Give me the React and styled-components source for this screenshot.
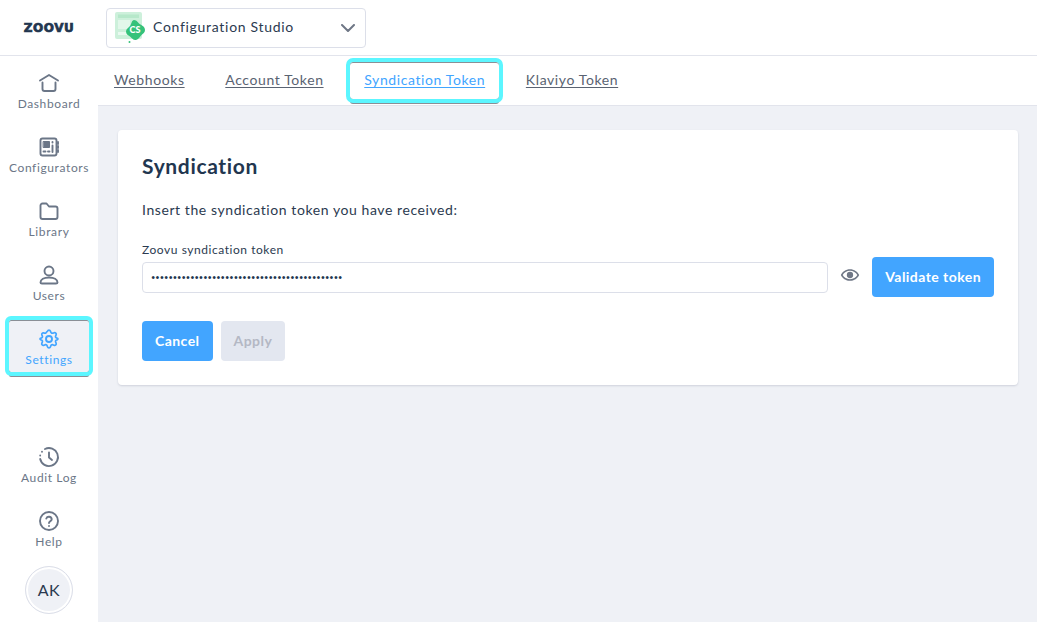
import React from 'react';
import styled, {createGlobalStyle} from 'styled-components';

const GlobalStyle = createGlobalStyle`
    html, body, #root {
        margin: 0;
        height: 100%;
    }
    body {
        font-family: Lato, "Noto Sans", sans-serif;
        color: #2b3a50;
        background: #eff1f6;
        overflow: hidden;
    }
    * {
        box-sizing: border-box;
    }
`;

const IconBase = ({children, size = 24, color = 'currentColor', ...rest}) => (
    <svg width={size} height={size} viewBox="0 0 24 24" fill="none" stroke={color} strokeWidth="1.9" strokeLinecap="round" strokeLinejoin="round" {...rest}>
        {children}
    </svg>
);

const HomeIcon = () => (
    <IconBase>
        <path d="M3 9.500 12 4l9 5.500" />
        <path d="M5.500 11.500V18a2 2 0 0 0 2 2h9a2 2 0 0 0 2-2v-6.500" />
    </IconBase>
);

const ConfiguratorIcon = () => (
    <IconBase>
        <rect x="3.500" y="3.500" width="16" height="17" rx="2" />
        <rect x="6.500" y="6.500" width="6" height="6" fill="currentColor" strokeWidth="1" />
        <path d="M15.500 7v.5M15.500 10.500V17M6.500 16.500h2M11 16.500h1.500M21 7v2M21 11v2M21 15v2" />
    </IconBase>
);

const FolderIcon = () => (
    <IconBase>
        <path d="M3.500 6.500a2 2 0 0 1 2-2h4l2.500 3h6.500a2 2 0 0 1 2 2v8.500a2 2 0 0 1-2 2h-13a2 2 0 0 1-2-2z" />
    </IconBase>
);

const UserIcon = () => (
    <IconBase>
        <circle cx="12" cy="8" r="4.500" />
        <path d="M3.500 19.500c0-3 3.500-5 8.500-5s8.500 2 8.500 5c0 .8-.6 1-1.500 1H5c-.9 0-1.500-.2-1.500-1z" />
    </IconBase>
);

const GearIcon = () => (
    <IconBase>
        <path d="M10.300 3.300a1.800 1.800 0 0 1 3.400 0l.4 1.100a1.800 1.800 0 0 0 2.400 1l1.100-.4a1.800 1.800 0 0 1 2.400 2.400l-.5 1a1.800 1.800 0 0 0 1 2.500l1.100.4a.8.8 0 0 1 0 1.400l-1.100.4a1.800 1.800 0 0 0-1 2.500l.5 1a1.800 1.800 0 0 1-2.400 2.400l-1.100-.4a1.800 1.800 0 0 0-2.400 1l-.4 1.100a1.800 1.800 0 0 1-3.400 0l-.4-1.100a1.800 1.800 0 0 0-2.400-1l-1.100.4a1.800 1.800 0 0 1-2.400-2.400l.5-1a1.800 1.800 0 0 0-1-2.500l-1.100-.4a.8.8 0 0 1 0-1.400l1.100-.4a1.800 1.800 0 0 0 1-2.500l-.5-1A1.800 1.800 0 0 1 5.700 5l1.100.4a1.800 1.800 0 0 0 2.400-1z" transform="translate(1.300 1.300) scale(.89)" />
        <circle cx="12" cy="12" r="3" />
    </IconBase>
);

const AuditIcon = () => (
    <IconBase>
        <path d="M8 4a9 9 0 1 1-4.800 10" />
        <path d="M12 7.500V12.500l3 2.500" />
        <path d="M3.200 10.500v.01M5 6.800v.01" />
    </IconBase>
);

const HelpIcon = () => (
    <IconBase>
        <circle cx="12" cy="12" r="9" />
        <path d="M9.300 9.500a2.800 2.800 0 0 1 5.400 .7c0 1.800-2.700 2.300-2.700 3.800" />
        <path d="M12 17v.01" />
    </IconBase>
);

const EyeIcon = () => (
    <svg width="20" height="20" viewBox="0 0 24 24" fill="#6f7786">
        <path d="M12 5C7 5 2.700 8.100 1 12c1.700 3.900 6 7 11 7s9.300-3.100 11-7c-1.700-3.900-6-7-11-7zm0 12c-3.800 0-7.200-2.100-8.800-5C4.800 9.100 8.200 7 12 7s7.200 2.100 8.800 5c-1.600 2.900-5 5-8.800 5z" />
        <circle cx="12" cy="12" r="3.800" />
    </svg>
);

const ChevronIcon = () => (
    <svg width="14" height="8" viewBox="0 0 14 8" fill="none" stroke="#6f7786" strokeWidth="2" strokeLinecap="round" strokeLinejoin="round">
        <path d="M1 1l6 6 6-6" />
    </svg>
);

const ProductIcon = () => (
    <svg width="31" height="31" viewBox="0 0 31 31">
        <rect x="0" y="0" width="27" height="27" rx="2" fill="#cdf0db" />
        <rect x="3" y="2.500" width="21" height="3.500" fill="#b6e8ca" />
        <rect x="3" y="8" width="12" height="9" fill="#e2f7ea" />
        <rect x="3" y="20" width="9" height="3" fill="#e9f9f0" />
        <path d="M19 8c3 0 4 3 6.500 4.500 2 1.200 4.500 2.500 4.500 5.500 0 2.500-2 3.500-3.500 5-1.700 1.700-3 4.500-5.500 5-2.800.5-4-2-6-3.500-2-1.500-4-2.500-4-5s2.500-3.500 4-5.500c1.500-2 1.800-6 4-6z" fill="#35c27a" />
        <circle cx="14.500" cy="30" r="1" fill="#35c27a" />
        <text x="20" y="21" fontFamily="Lato, sans-serif" fontSize="9" fontWeight="900" fill="#ffffff" textAnchor="middle">CS</text>
    </svg>
);

const Page = styled.div`
    display: flex;
    flex-direction: column;
    width: 100%;
    height: 100vh;
`;

const Header = styled.header`
    display: flex;
    align-items: center;
    height: 56px;
    flex-shrink: 0;
    background: #fff;
    border-bottom: 1px solid #e2e4ec;
`;

const LogoBox = styled.div`
    display: flex;
    justify-content: center;
    width: 98px;
    padding-top: 1px;
`;

const Logo = styled.span`
    font-family: "DejaVu Sans", sans-serif;
    font-size: 12px;
    font-weight: 700;
    letter-spacing: 0.5px;
    color: #22364f;
    -webkit-text-stroke: 0.7px #22364f;
`;

const ProductSelect = styled.div`
    display: flex;
    align-items: center;
    width: 260px;
    height: 40px;
    margin-left: 8px;
    padding: 0 10px 0 8px;
    background: #fff;
    border: 1px solid #dcdfe9;
    border-radius: 4px;
`;

const ProductName = styled.span`
    flex: 1;
    margin-left: 7px;
    padding-bottom: 2px;
    font-size: 14px;
    letter-spacing: 0.7px;
    color: #2b3a50;
`;

const Body = styled.div`
    display: flex;
    flex: 1;
    min-height: 0;
`;

const Sidebar = styled.nav`
    display: flex;
    flex-direction: column;
    align-items: center;
    gap: 12px;
    width: 98px;
    flex-shrink: 0;
    padding: 8px 0;
    background: #fff;
`;

const SideGroup = styled.div`
    display: flex;
    flex-direction: column;
    align-items: center;
    gap: 12px;
    margin-top: ${props => (props.$bottom ? 'auto' : '0')};
`;

const SideItem = styled.a`
    display: flex;
    flex-direction: column;
    align-items: center;
    width: 80px;
    height: 52px;
    padding-top: 7px;
    border-radius: 2px;
    font-size: 12px;
    line-height: 16px;
    letter-spacing: 0.62px;
    white-space: nowrap;
    color: ${props => (props.$active ? '#42a5ff' : '#6b7687')};
    background: ${props => (props.$active ? '#eff1f6' : 'transparent')};
    svg {
        margin-bottom: 1px;
    }
    ${props => props.$active && `
        outline: 4px solid #5cf6ff;
        box-shadow: inset 0 1px 0 #8a8f96, 0 5px 0 0 #8a8f96;
    `}
`;

const Avatar = styled.div`
    display: flex;
    align-items: center;
    justify-content: center;
    width: 48px;
    height: 48px;
    padding-bottom: 1px;
    border-radius: 50%;
    background: #eff1f6;
    border: 1px solid #dcdfe9;
    box-shadow: inset 0 0 0 2px #fff;
    font-size: 16px;
    letter-spacing: 0.6px;
    color: #2b3a50;
`;

const Main = styled.main`
    display: flex;
    flex-direction: column;
    flex: 1;
    min-width: 0;
`;

const TabBar = styled.div`
    display: flex;
    align-items: center;
    gap: 12.7px;
    height: 50px;
    padding-left: 2px;
    background: #fff;
    border-bottom: 1px solid #e2e4ec;
`;

const Tab = styled.a`
    display: flex;
    align-items: center;
    height: 37px;
    padding: 0 14px 2px;
    font-size: 14px;
    letter-spacing: 0.6px;
    text-decoration: underline;
    text-underline-offset: 2px;
    border-radius: 3px;
    color: ${props => (props.$active ? '#42a5ff' : '#5a6372')};
    ${props => props.$active && `
        outline: 4px solid #5cf6ff;
        box-shadow: inset 0 1px 0 #8a8f96, 0 5px 0 0 #8a8f96;
    `}
`;

const Content = styled.div`
    flex: 1;
    padding: 24px 19px 0 20px;
`;

const Card = styled.section`
    display: flex;
    flex-direction: column;
    height: 255px;
    padding: 24px;
    background: #fff;
    border-radius: 4px;
    box-shadow: 0 1px 2px rgba(60, 70, 100, 0.18);
`;

const Title = styled.h2`
    margin: 0;
    font-size: 21px;
    font-weight: 700;
    line-height: 24px;
    letter-spacing: 0.65px;
    color: #22364f;
`;

const Lead = styled.p`
    margin: 24px 0 0;
    font-size: 14px;
    line-height: 16px;
    letter-spacing: 0.58px;
    color: #2b3a50;
`;

const FieldLabel = styled.label`
    margin-top: 24px;
    font-size: 12px;
    line-height: 16px;
    letter-spacing: 0.55px;
    color: #2b3a50;
`;

const FieldRow = styled.div`
    display: flex;
    align-items: center;
    height: 40px;
    margin-top: -1px;
`;

const TokenInput = styled.input`
    flex: 1;
    min-width: 0;
    height: 31px;
    margin-top: 1px;
    padding: 0 8px;
    font-family: Lato, sans-serif;
    font-size: 7.5px;
    color: #22364f;
    background: #fff;
    border: 1px solid #dcdfe9;
    border-radius: 4px;
    outline: none;
`;

const EyeButton = styled.span`
    display: flex;
    justify-content: center;
    width: 44px;
    margin-bottom: 4px;
`;

const Button = styled.button`
    height: 40px;
    padding: 0 13px 2px;
    border: none;
    border-radius: 4px;
    font-family: Lato, sans-serif;
    font-size: 14px;
    font-weight: 700;
    letter-spacing: 0.45px;
    color: ${props => (props.disabled ? '#b4b8c4' : '#fff')};
    background: ${props => (props.disabled ? '#e3e7f0' : '#42a5ff')};
`;

const Actions = styled.div`
    display: flex;
    gap: 8px;
    margin-top: 24px;
`;

const sideTop = [
    {label: 'Dashboard', icon: <HomeIcon />},
    {label: 'Configurators', icon: <ConfiguratorIcon />},
    {label: 'Library', icon: <FolderIcon />},
    {label: 'Users', icon: <UserIcon />},
    {label: 'Settings', icon: <GearIcon />, active: true},
];

const sideBottom = [
    {label: 'Audit Log', icon: <AuditIcon />},
    {label: 'Help', icon: <HelpIcon />},
];

const tabs = ['Webhooks', 'Account Token', 'Syndication Token', 'Klaviyo Token'];

const App = () => {
    return (
        <React.Fragment>
            <GlobalStyle />
            <Page>
                <Header>
                    <LogoBox><Logo>ZOOVU</Logo></LogoBox>
                    <ProductSelect>
                        <ProductIcon />
                        <ProductName>Configuration Studio</ProductName>
                        <ChevronIcon />
                    </ProductSelect>
                </Header>
                <Body>
                    <Sidebar>
                        <SideGroup>
                            {sideTop.map(item => (
                                <SideItem key={item.label} $active={item.active}>{item.icon}{item.label}</SideItem>
                            ))}
                        </SideGroup>
                        <SideGroup $bottom>
                            {sideBottom.map(item => (
                                <SideItem key={item.label}>{item.icon}{item.label}</SideItem>
                            ))}
                            <Avatar>AK</Avatar>
                        </SideGroup>
                    </Sidebar>
                    <Main>
                        <TabBar>
                            {tabs.map(tab => (
                                <Tab key={tab} $active={tab === 'Syndication Token'}>{tab}</Tab>
                            ))}
                        </TabBar>
                        <Content>
                            <Card>
                                <Title>Syndication</Title>
                                <Lead>Insert the syndication token you have received:</Lead>
                                <FieldLabel>Zoovu syndication token</FieldLabel>
                                <FieldRow>
                                    <TokenInput type="password" readOnly value={'x'.repeat(44)} />
                                    <EyeButton><EyeIcon /></EyeButton>
                                    <Button>Validate token</Button>
                                </FieldRow>
                                <Actions>
                                    <Button>Cancel</Button>
                                    <Button disabled>Apply</Button>
                                </Actions>
                            </Card>
                        </Content>
                    </Main>
                </Body>
            </Page>
        </React.Fragment>
    )
}

export default App;
